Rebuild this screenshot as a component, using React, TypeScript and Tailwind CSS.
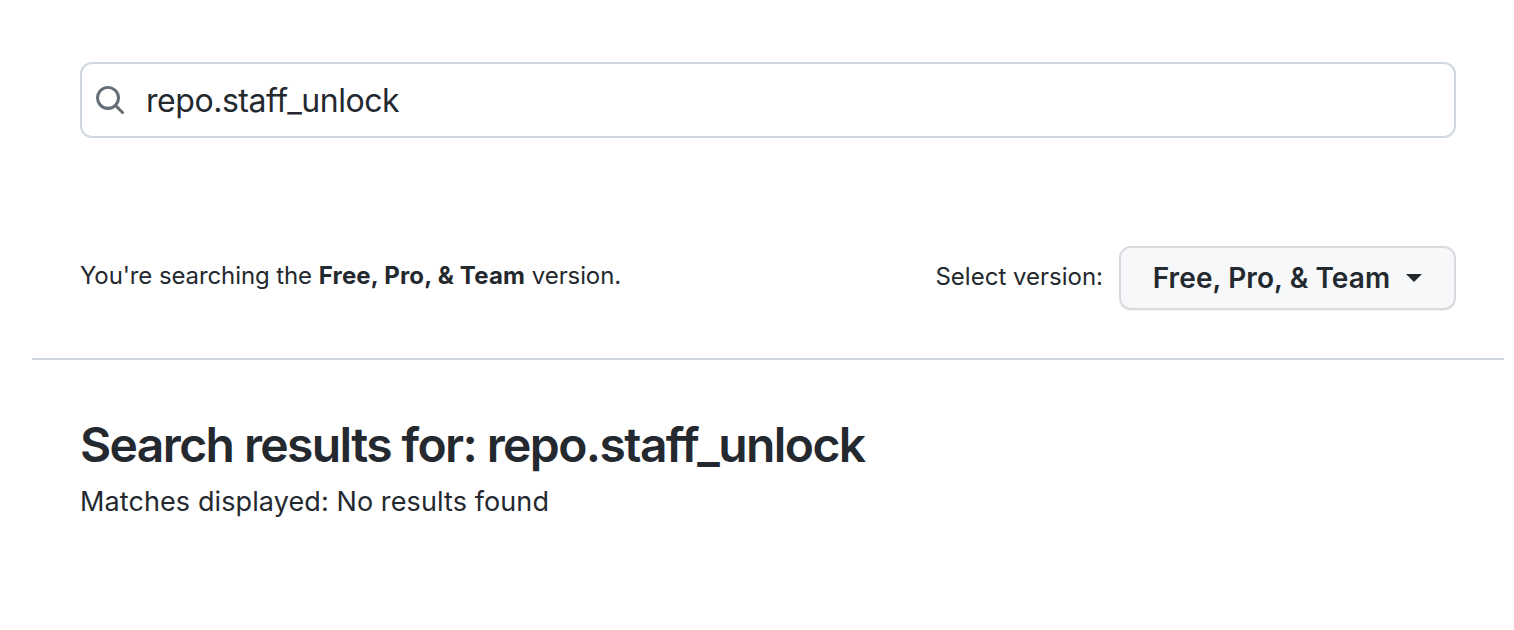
const font = 'font-["Inter",sans-serif]';

const SearchIcon = () => (
  <svg width="32" height="32" viewBox="0 0 16 16" fill="#656d76" className="shrink-0">
    <path d="M10.68 11.74a6 6 0 0 1-7.922-8.982 6 6 0 0 1 8.982 7.922l3.04 3.04a.749.749 0 0 1-.326 1.275.749.749 0 0 1-.734-.215ZM11.5 7a4.499 4.499 0 1 0-8.997 0A4.499 4.499 0 0 0 11.5 7Z" />
  </svg>
);

const App = () => {
  return (
    <div className={`${font} h-[630px] w-full overflow-hidden bg-white text-[#24292f]`}>
      <div className="px-[80px] pr-[58px] pt-[62px]">
        <div className="flex h-[76px] items-center rounded-[12px] border-2 border-[#d0d7de] pl-[12px]">
          <SearchIcon />
          <span className="ml-[20px] mt-[2px] text-[32px] leading-none tracking-[-0.45px]">repo.staff_unlock</span>
        </div>

        <div className="mt-[108px] flex h-[64px] items-center justify-between">
          <p className="mb-[4px] text-[24px] leading-none tracking-[-0.1px]">
            You're searching the <b className="font-bold tracking-[0.2px]">Free, Pro, &amp; Team</b> version.
          </p>
          <div className="flex items-center gap-[16px]">
            <span className="mb-[2px] text-[24px] leading-none">Select version:</span>
            <button className="flex h-[64px] w-[337px] items-center justify-center rounded-[12px] border-2 border-[#d8dadd] bg-[#f6f8fa] text-[28px] font-semibold tracking-[0.1px] shadow-[0_1px_0_rgba(31,35,40,0.04)]">
              Free, Pro, &amp; Team
              <span className="ml-[16px] h-0 w-0 border-x-[8px] border-t-[8px] border-x-transparent border-t-[#24292f]" />
            </button>
          </div>
        </div>
      </div>

      <hr className="mx-[32px] mt-[48px] w-[1472px] border-t-2 border-[#d0d7de]" />

      <div className="px-[80px] pt-[56px]">
        <h1 className="text-[48px] font-semibold leading-[58px] tracking-[-1.6px]">Search results for: repo.staff_unlock</h1>
        <p className="mt-[12px] text-[27px] leading-[32px] tracking-[0.1px]">Matches displayed: No results found</p>
      </div>
    </div>
  );
};

export default App;
